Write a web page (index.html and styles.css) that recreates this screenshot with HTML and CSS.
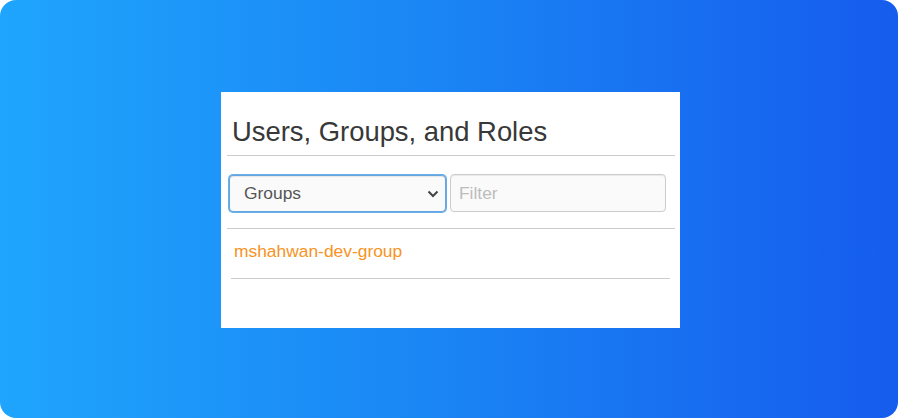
FILE: index.html
```
<!DOCTYPE html>
<html>
<head>
<meta charset="utf-8">
<link rel="stylesheet" href="styles.css">
</head>
<body>
<div class="stage">
  <div class="panel">
    <h1 class="title">Users, Groups, and Roles</h1>
    <div class="toolbar">
      <div class="select">
        <span class="select-value">Groups</span>
        <svg class="chev" width="12" height="8" viewBox="0 0 12 8"><path d="M1.5 1.5 L6 6 L10.5 1.5" fill="none" stroke="#444" stroke-width="2"/></svg>
      </div>
      <div class="filter">Filter</div>
    </div>
    <ul class="list">
      <li class="item"><a class="item-link">mshahwan-dev-group</a></li>
    </ul>
  </div>
</div>
</body>
</html>
```
FILE: styles.css
```
html, body { margin: 0; padding: 0; background: #fff; }
body { font-family: "Liberation Sans", Arial, sans-serif; }
.stage {
  width: 898px; height: 418px; box-sizing: border-box;
  border-radius: 16px;
  background: linear-gradient(90deg, #1fa5fd 0%, #1a84f4 50%, #165cee 100%);
  padding: 92px 0 0 221px;
}
.panel {
  width: 459px; height: 236px; box-sizing: border-box;
  background: #fff;
  padding: 23px 5px 0 6px;
}
.title {
  margin: 0; padding: 0 0 6px 5px;
  font-weight: 400; font-size: 27.4px; line-height: 34px; color: #383838;
  border-bottom: 1px solid #ccc;
}
.toolbar {
  display: flex; gap: 4px; padding: 19px 9px 16px 2px;
  border-bottom: 1px solid #ccc;
}
.select {
  width: 217px; height: 37px; box-sizing: border-box;
  border: 1px solid #66a5dd; border-radius: 4px;
  box-shadow: 0 0 0 1px #66afe9, inset 0 1px 1px rgba(0,0,0,.08);
  background: #fafafa;
  display: flex; align-items: center; justify-content: space-between;
  padding: 0 6px 0 14px;
  font-size: 17.4px; color: #555;
}
.chev { display: block; }
.filter {
  width: 216px; height: 38px; box-sizing: border-box; margin-top: -1px;
  border: 1px solid #ccc; border-radius: 4px;
  background: #fafafa;
  box-shadow: inset 0 1px 1px rgba(0,0,0,.075);
  display: flex; align-items: center; padding: 0 8px;
  font-size: 17.4px; color: #bdbdbd;
}
.list { list-style: none; margin: 0; padding: 0 5px 0 4px; }
.item { border-bottom: 1px solid #ccc; padding: 11px 3px 16px; }
.item-link { font-size: 17.4px; color: #f7931e; line-height: 22px; display: block; }
```
